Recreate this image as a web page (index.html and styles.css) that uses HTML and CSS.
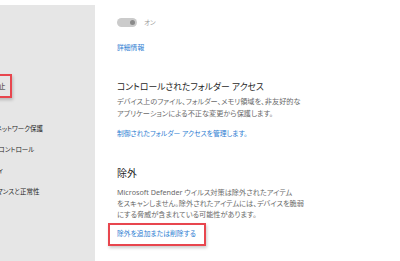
FILE: index.html
```html
<!DOCTYPE html>
<html lang="ja">
<head>
<meta charset="utf-8">
<title>ランサムウェアの防止</title>
<link rel="stylesheet" href="styles.css">
</head>
<body>
<div class="app">
  <nav class="sidebar">
    <ul class="nav-list">
      <li class="nav-item"><span class="nav-label">ホーム</span></li>
      <li class="nav-item"><span class="nav-label boxed-nav">ウイルスと脅威の防止</span></li>
      <li class="nav-item"><span class="nav-label">アカウントの保護</span></li>
      <li class="nav-item"><span class="nav-label">ファイアウォールとネットワーク保護</span></li>
      <li class="nav-item"><span class="nav-label">アプリとブラウザー コントロール</span></li>
      <li class="nav-item"><span class="nav-label">デバイス セキュリティ</span></li>
      <li class="nav-item"><span class="nav-label">デバイスのパフォーマンスと正常性</span></li>
      <li class="nav-item"><span class="nav-label">ファミリ オプション</span></li>
    </ul>
  </nav>
  <main class="content">
    <div class="toggle-row">
      <span class="switch"><span class="knob"></span></span>
      <span class="toggle-label">オン</span>
    </div>
    <a class="link more-link">詳細情報</a>

    <section class="section">
      <h2 class="section-title">コントロールされたフォルダー アクセス</h2>
      <p class="desc desc-cfa">デバイス上のファイル、フォルダー、メモリ領域を、非友好的な<br>アプリケーションによる不正な変更から保護します。</p>
      <a class="link cfa-link">制御されたフォルダー アクセスを管理します。</a>
    </section>

    <section class="section">
      <h2 class="section-title title-excl">除外</h2>
      <p class="desc desc-excl">Microsoft Defender ウイルス対策は除外されたアイテム<br>をスキャンしません。除外されたアイテムには、デバイスを脆弱<br>にする脅威が含まれている可能性があります。</p>
      <a class="link boxed-link">除外を追加または削除する</a>
    </section>
  </main>
</div>
</body>
</html>
```

FILE: styles.css
```css
* { box-sizing: border-box; }
html, body {
  margin: 0;
  padding: 0;
  background: #ffffff;
}
body {
  font-family: "Noto Sans", "Noto Sans CJK JP", sans-serif;
  font-feature-settings: "palt";
  color: #1f1f1f;
  width: 400px;
  height: 261px;
  overflow: hidden;
}
.app {
  display: flex;
  height: 261px;
}
.sidebar {
  width: 95px;
  flex: none;
  margin-top: 5px;
  background: #e6e6e6;
  overflow: hidden;
}
.nav-list {
  list-style: none;
  margin: 0;
  padding: 0;
  margin-left: -56px;
  margin-top: 49px;
  width: 200px;
}
.nav-item {
  height: 21px;
  display: flex;
  align-items: center;
  font-size: 6.5px;
  color: #1f1f1f;
  white-space: nowrap;
}
.boxed-nav {
  border: 2px solid #e8464e;
  padding: 5px 4px 5px 20px;
  margin-left: -22px;
  box-shadow: 1px 2px 3px rgba(0,0,0,0.2);
}
.content {
  flex: 1;
  padding-left: 22px;
  padding-top: 17px;
}
.toggle-row {
  display: flex;
  align-items: center;
  height: 10px;
  gap: 7px;
}
.switch {
  width: 20px;
  height: 9px;
  border-radius: 5px;
  background: #cbcbcb;
  display: flex;
  align-items: center;
  justify-content: flex-end;
  padding-right: 2px;
}
.knob {
  width: 5px;
  height: 5px;
  border-radius: 50%;
  background: #8a8a8a;
}
.toggle-label {
  font-size: 6.5px;
  color: #9a9a9a;
}
.link {
  display: block;
  color: #2d7dd2;
  font-size: 6.8px;
  line-height: 12px;
}
.more-link {
  margin-top: 15px;
}
.section-title {
  margin: 26px 0 0;
  font-size: 8.8px;
  font-weight: 400;
  line-height: 14px;
  color: #1f1f1f;
}
.desc {
  margin: 0;
  font-size: 7.2px;
  color: #6a6a6a;
  white-space: nowrap;
}
.desc-cfa {
  margin-top: 1px;
  line-height: 12px;
}
.cfa-link {
  margin-top: 9px;
}
.title-excl {
  margin-top: 26px;
  font-size: 10px;
}
.desc-excl {
  margin-top: 6.5px;
  line-height: 11px;
}
.boxed-link {
  width: fit-content;
  margin-top: 3px;
  margin-left: -9px;
  border: 2px solid #e8464e;
  padding: 3.5px 8px 3.5px 7px;
  box-shadow: 1px 2px 3px rgba(0,0,0,0.2);
}
```
